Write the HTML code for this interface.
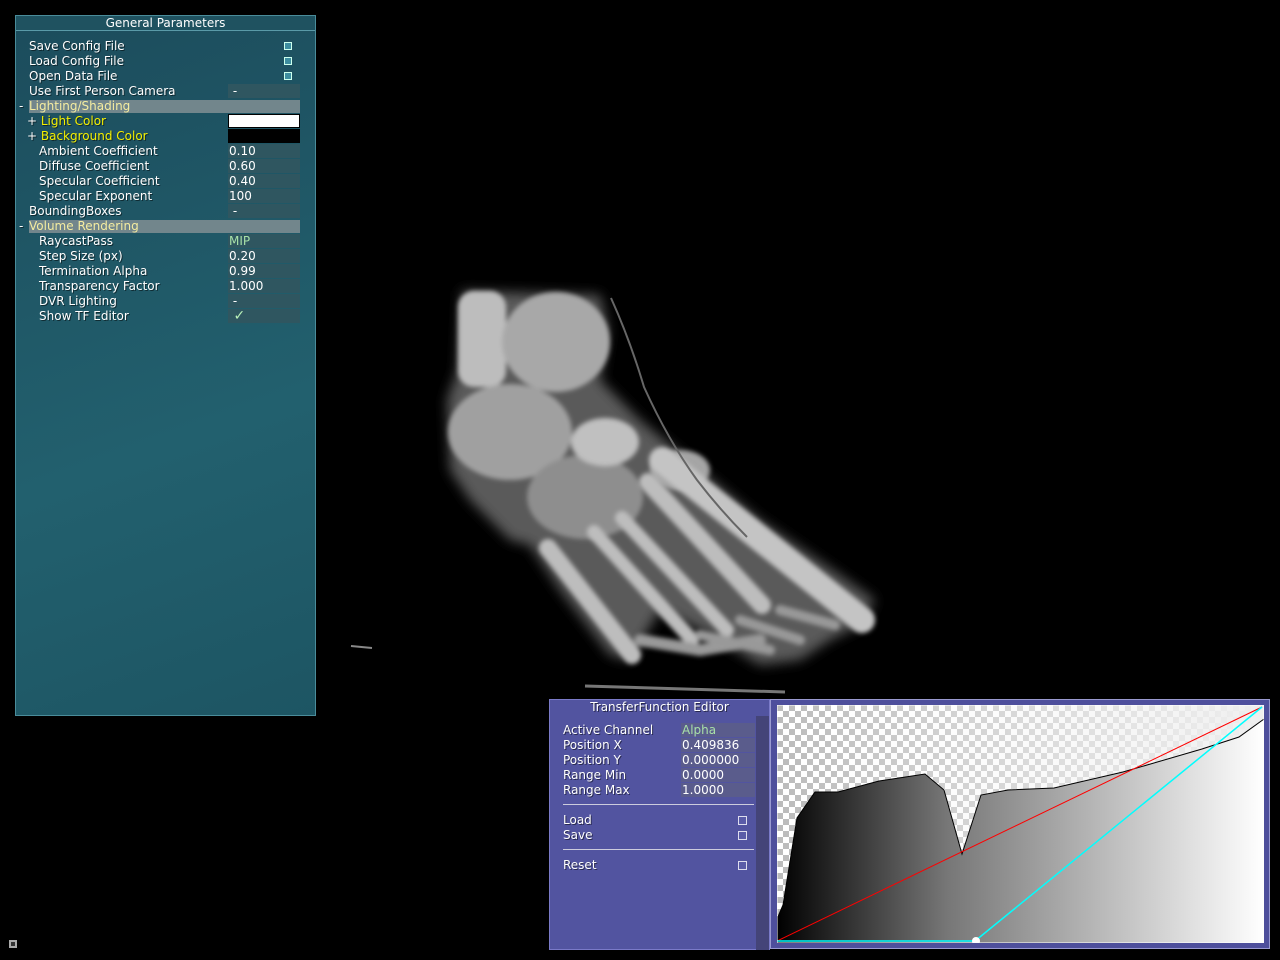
<!DOCTYPE html>
<html><head><meta charset="utf-8"><style>
*{margin:0;padding:0;box-sizing:border-box}
body{width:1280px;height:960px;background:#000;position:relative;overflow:hidden;font-family:"DejaVu Sans","Liberation Sans",sans-serif;font-size:12px;color:#fff}
.gp{position:absolute;left:15px;top:15px;width:301px;height:701px;background:linear-gradient(160deg,#1c4c5c 0%,#22606e 60%,#1d5563 100%);border:1px solid #4a8c9a}
.gp .tt{position:absolute;left:0;top:0;width:100%;height:15px;text-align:center;font-size:12px;line-height:15px;border-bottom:1px solid #5a9aa8;background:#1f5260}
.r{position:absolute;height:14px;line-height:14px;white-space:nowrap;text-shadow:1px 1px 0 rgba(0,0,0,.5)}
.v{position:absolute;left:212px;width:72px;height:14px;background:#2f5660;line-height:14px;padding-left:1px}
.hd{position:absolute;left:13px;width:271px;height:13px;background:#72868c;color:#f4eca0;line-height:13px}
.cb{position:absolute;left:268px;width:8px;height:8px;border:1px solid #cfe;background:#3d8ea0}
.tf{position:absolute;left:549px;top:699px;width:221px;height:251px;background:#5254a0;border:1px solid #7a7ac8}
.tfv{position:absolute;left:131px;width:74px;height:14px;background:#5a5c8c;line-height:14px;padding-left:1px}
.cb2{position:absolute;left:188px;width:9px;height:9px;border:1px solid #dde;background:#5a5ca8}
.gph{position:absolute;left:770px;top:699px;width:500px;height:250px;background:#4e4f9c;border:1px solid #9a9ad0}
</style></head><body>

<div class="gp">
 <div class="tt">General Parameters</div>
 <div class="r" style="left:13px;top:23px">Save Config File</div><div class="cb" style="top:26px"></div>
 <div class="r" style="left:13px;top:38px">Load Config File</div><div class="cb" style="top:41px"></div>
 <div class="r" style="left:13px;top:53px">Open Data File</div><div class="cb" style="top:56px"></div>
 <div class="r" style="left:13px;top:68px">Use First Person Camera</div><div class="v" style="top:68px">&nbsp;-</div>
 <div class="hd" style="top:84px">Lighting/Shading</div><div class="r" style="left:3px;top:83px">-</div>
 <div class="r" style="left:11px;top:98px">+ <span style="color:#f4f000">Light Color</span></div><div class="v" style="top:98px;background:#fff;border:1px solid #000"></div>
 <div class="r" style="left:11px;top:113px">+ <span style="color:#f4f000">Background Color</span></div><div class="v" style="top:113px;background:#000"></div>
 <div class="r" style="left:23px;top:128px">Ambient Coefficient</div><div class="v" style="top:128px">0.10</div>
 <div class="r" style="left:23px;top:143px">Diffuse Coefficient</div><div class="v" style="top:143px">0.60</div>
 <div class="r" style="left:23px;top:158px">Specular Coefficient</div><div class="v" style="top:158px">0.40</div>
 <div class="r" style="left:23px;top:173px">Specular Exponent</div><div class="v" style="top:173px">100</div>
 <div class="r" style="left:13px;top:188px">BoundingBoxes</div><div class="v" style="top:188px">&nbsp;-</div>
 <div class="hd" style="top:204px">Volume Rendering</div><div class="r" style="left:3px;top:203px">-</div>
 <div class="r" style="left:23px;top:218px">RaycastPass</div><div class="v" style="top:218px;color:#a8e0a8">MIP</div>
 <div class="r" style="left:23px;top:233px">Step Size (px)</div><div class="v" style="top:233px">0.20</div>
 <div class="r" style="left:23px;top:248px">Termination Alpha</div><div class="v" style="top:248px">0.99</div>
 <div class="r" style="left:23px;top:263px">Transparency Factor</div><div class="v" style="top:263px">1.000</div>
 <div class="r" style="left:23px;top:278px">DVR Lighting</div><div class="v" style="top:278px">&nbsp;-</div>
 <div class="r" style="left:23px;top:293px">Show TF Editor</div><div class="v" style="top:293px;color:#b8f0b8;font-size:14px">&nbsp;✓</div>
</div>

<svg style="position:absolute;left:0;top:0" width="1280" height="960">
<defs><filter id="b"><feGaussianBlur stdDeviation="2.5"/></filter><filter id="b2"><feGaussianBlur stdDeviation="6"/></filter></defs>
<polygon filter="url(#b2)" fill="#5a5a5a" points="462,291 600,295 608,330 600,380 640,420 700,470 760,520 840,575 875,600 860,625 830,640 800,660 760,665 720,640 660,610 630,660 610,655 560,590 530,545 510,540 470,500 450,470 447,400 458,370"/>
<g filter="url(#b)">
<rect x="458" y="291" width="48" height="96" rx="16" fill="#bdbdbd"/>
<ellipse cx="556" cy="342" rx="54" ry="50" fill="#a8a8a8"/>
<ellipse cx="510" cy="432" rx="62" ry="48" fill="#a0a0a0"/>
<ellipse cx="585" cy="497" rx="58" ry="42" fill="#8e8e8e"/>
<ellipse cx="605" cy="442" rx="34" ry="24" fill="#c0c0c0"/>
<ellipse cx="680" cy="470" rx="30" ry="20" fill="#a5a5a5"/>
</g>
<g stroke="#bdbdbd" stroke-linecap="round" fill="none" filter="url(#b)">
<path d="M548 548 L632 655" stroke-width="18"/>
<path d="M594 532 L692 640" stroke-width="14"/>
<path d="M622 518 L727 630" stroke-width="14"/>
<path d="M648 482 L762 605" stroke-width="18"/>
<path d="M662 460 L862 620" stroke-width="26" stroke="#c4c4c4"/>
<path d="M640 640 L700 650 L760 640" stroke-width="12" stroke="#9a9a9a"/>
<path d="M700 635 L770 650" stroke-width="10" stroke="#999"/>
<path d="M740 620 L800 640" stroke-width="10" stroke="#999"/>
<path d="M780 610 L835 625" stroke-width="10" stroke="#999"/>
</g>
<path d="M611 298 Q630 340 644 387 Q668 440 697 480 Q720 510 747 537" stroke="#666" stroke-width="2" fill="none"/>
<path d="M585 686 L785 692" stroke="#777" stroke-width="3"/>
<path d="M351 646 L372 648" stroke="#888" stroke-width="2"/>
<rect x="9" y="940" width="8" height="8" fill="#aaa"/><rect x="11" y="942" width="4" height="4" fill="#333"/>
</svg>

<div class="tf">
 <div class="r" style="left:0;width:100%;text-align:center;top:0">TransferFunction Editor</div>
 <div style="position:absolute;left:206px;top:16px;width:13px;height:234px;background:#444478"></div>
 <div class="r" style="left:13px;top:23px">Active Channel</div><div class="tfv" style="top:23px;color:#a8e0a8">Alpha</div>
 <div class="r" style="left:13px;top:38px">Position X</div><div class="tfv" style="top:38px">0.409836</div>
 <div class="r" style="left:13px;top:53px">Position Y</div><div class="tfv" style="top:53px">0.000000</div>
 <div class="r" style="left:13px;top:68px">Range Min</div><div class="tfv" style="top:68px">0.0000</div>
 <div class="r" style="left:13px;top:83px">Range Max</div><div class="tfv" style="top:83px">1.0000</div>
 <div style="position:absolute;left:13px;top:104px;width:191px;height:1px;background:#ccd"></div>
 <div class="r" style="left:13px;top:113px">Load</div><div class="cb2" style="top:116px"></div>
 <div class="r" style="left:13px;top:128px">Save</div><div class="cb2" style="top:131px"></div>
 <div style="position:absolute;left:13px;top:149px;width:191px;height:1px;background:#ccd"></div>
 <div class="r" style="left:13px;top:158px">Reset</div><div class="cb2" style="top:161px"></div>
</div>

<div class="gph"></div>
<svg style="position:absolute;left:777px;top:705px" width="487" height="238">
<defs>
<pattern id="ck" width="12" height="12" patternUnits="userSpaceOnUse"><rect width="12" height="12" fill="#fff"/><rect width="6" height="6" fill="#bbb"/><rect x="6" y="6" width="6" height="6" fill="#bbb"/></pattern>
<linearGradient id="fw"><stop offset="0" stop-color="#fff" stop-opacity="0"/><stop offset="1" stop-color="#eee" stop-opacity="1"/></linearGradient>
<linearGradient id="g"><stop offset="0" stop-color="#000"/><stop offset="0.35" stop-color="#777"/><stop offset="1" stop-color="#fff"/></linearGradient>
</defs>
<rect width="487" height="238" fill="url(#ck)"/>
<rect width="487" height="238" fill="url(#fw)"/>
<path d="M0 214 L6 200 L20 113 L38 87 L61 87 L102 76 L148 69 L167 85 L185 149 L204 90 L231 85 L277 83 L346 67 L425 44 L462 32 L487 14 L487 238 L0 238Z" fill="url(#g)"/>
<path d="M0 214 L6 200 L20 113 L38 87 L61 87 L102 76 L148 69 L167 85 L185 149 L204 90 L231 85 L277 83 L346 67 L425 44 L462 32 L487 14" fill="none" stroke="#000" stroke-width="1"/>
<line x1="0" y1="236" x2="485" y2="2" stroke="#f00" stroke-width="1"/>
<polyline points="0,236 198,236 485,2" fill="none" stroke="#0ff" stroke-width="1.5"/>
<circle cx="199" cy="236" r="4" fill="#fff"/>
<rect x="0" y="0" width="487" height="238" fill="none" stroke="#fff" stroke-width="1"/>
</svg>
</body></html>
